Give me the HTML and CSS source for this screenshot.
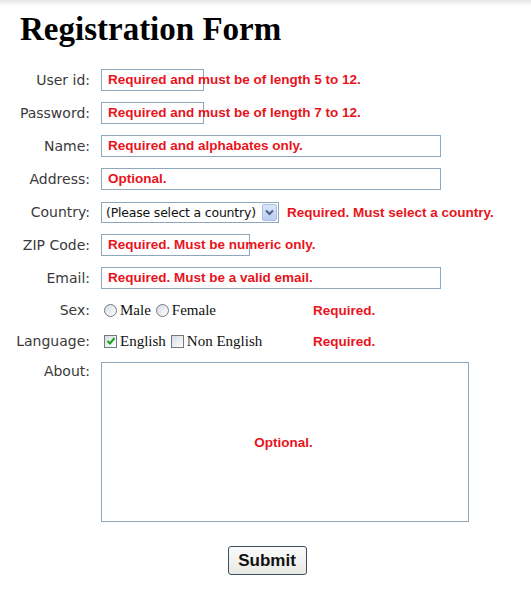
FILE: index.html
```html
<!DOCTYPE html>
<html>
<head>
<meta charset="utf-8">
<link rel="stylesheet" href="styles.css">
</head>
<body>
<div class="topshade"></div>
<h1 class="title">Registration Form</h1>
<div class="form">
  <div class="label">User id:</div>
  <div class="field"><div class="box w-short"></div><span class="msg">Required and must be of length 5 to 12.</span></div>

  <div class="label">Password:</div>
  <div class="field"><div class="box w-short"></div><span class="msg">Required and must be of length 7 to 12.</span></div>

  <div class="label">Name:</div>
  <div class="field"><div class="box w-long"></div><span class="msg">Required and alphabates only.</span></div>

  <div class="label">Address:</div>
  <div class="field"><div class="box w-long"></div><span class="msg">Optional.</span></div>

  <div class="label">Country:</div>
  <div class="field inline">
    <div class="select"><span class="select-text">(Please select a country)</span><span class="select-btn"><svg width="9" height="7" viewBox="0 0 9 7"><path d="M1 1.5 L4.5 5 L8 1.5" fill="none" stroke="#4d6185" stroke-width="2"/></svg></span></div>
    <span class="msg-inline">Required. Must select a country.</span>
  </div>

  <div class="label">ZIP Code:</div>
  <div class="field"><div class="box w-mid"></div><span class="msg">Required. Must be numeric only.</span></div>

  <div class="label">Email:</div>
  <div class="field"><div class="box w-long"></div><span class="msg">Required. Must be a valid email.</span></div>

  <div class="label small">Sex:</div>
  <div class="field choice small">
    <div class="options">
      <span class="radio"></span><span class="opt">Male</span>
      <span class="radio"></span><span class="opt">Female</span>
    </div>
    <span class="req">Required.</span>
  </div>

  <div class="label small">Language:</div>
  <div class="field choice small">
    <div class="options">
      <span class="check on"><svg width="10" height="10" viewBox="0 0 10 10"><path d="M1.5 5 L4 7.5 L8.5 2" fill="none" stroke="#21a121" stroke-width="2"/></svg></span><span class="opt">English</span>
      <span class="check"></span><span class="opt">Non English</span>
    </div>
    <span class="req">Required.</span>
  </div>

  <div class="label top">About:</div>
  <div class="field tall"><div class="textarea"><span class="msg-center">Optional.</span></div></div>
</div>
<div class="actions"><button class="submit">Submit</button></div>
</body>
</html>
```
FILE: styles.css
```css
html, body {
  margin: 0;
  padding: 0;
  background: #fff;
}
body {
  width: 531px;
  height: 594px;
  overflow: hidden;
  position: relative;
}
.topshade {
  position: absolute;
  left: 0;
  top: 0;
  width: 100%;
  height: 6px;
  background: linear-gradient(#e6e6e6, #ffffff);
}
.title {
  font-family: "Liberation Serif", "Times New Roman", serif;
  font-weight: bold;
  font-size: 33px;
  line-height: 38px;
  margin: 0;
  padding: 10px 0 0 20px;
  color: #000;
  position: relative;
}
.form {
  display: grid;
  grid-template-columns: 90px auto;
  column-gap: 11px;
  row-gap: 11px;
  margin-top: 21px;
}
.label {
  font-family: "DejaVu Sans", Verdana, sans-serif;
  font-size: 14px;
  color: #3a3a3a;
  text-align: right;
  height: 22px;
  line-height: 22px;
}
.label.small { height: 20px; line-height: 20px; }
.label.top { line-height: 18px; }
.field {
  position: relative;
  height: 22px;
}
.field.small { height: 20px; }
.field.tall { height: 160px; }
.box {
  box-sizing: border-box;
  height: 22px;
  border: 1px solid #8fa6bb;
  background: #fff;
}
.w-short { width: 103px; }
.w-mid { width: 149px; }
.w-long { width: 340px; }
.msg {
  position: absolute;
  left: 7px;
  top: 0;
  line-height: 22px;
  white-space: nowrap;
  font-family: "Liberation Sans", Arial, sans-serif;
  font-weight: bold;
  font-size: 13.5px;
  color: #e8141c;
}
.inline {
  display: flex;
  align-items: center;
  gap: 8px;
}
.select {
  box-sizing: border-box;
  width: 178px;
  height: 21px;
  border: 1px solid #8fa6bb;
  display: flex;
  align-items: center;
  justify-content: space-between;
  padding: 0 1px 0 4px;
  background: #fff;
}
.select-text {
  font-family: "DejaVu Sans", Verdana, sans-serif;
  font-size: 12.5px;
  color: #111;
  letter-spacing: -0.2px;
  white-space: nowrap;
}
.select-btn {
  width: 15px;
  height: 17px;
  box-sizing: border-box;
  border: 1px solid #a9bde6;
  background: linear-gradient(#dbe6fb, #bccdf2);
  display: flex;
  align-items: center;
  justify-content: center;
  border-radius: 2px;
}
.msg-inline {
  font-family: "Liberation Sans", Arial, sans-serif;
  font-weight: bold;
  font-size: 13.5px;
  color: #e8141c;
  white-space: nowrap;
}
.choice {
  display: flex;
  align-items: center;
}
.options {
  display: flex;
  align-items: center;
  width: 209px;
  padding-left: 3px;
}
.radio {
  width: 13px;
  height: 13px;
  box-sizing: border-box;
  border: 1px solid #6e7a86;
  border-radius: 50%;
  background: linear-gradient(135deg, #d6dbe2, #ffffff);
  margin-right: 3px;
}
.check {
  width: 13px;
  height: 13px;
  box-sizing: border-box;
  border: 1px solid #6e7a86;
  background: linear-gradient(135deg, #d6dbe2, #ffffff);
  display: flex;
  align-items: center;
  justify-content: center;
  margin-right: 3px;
}
.opt {
  font-family: "Liberation Serif", "Times New Roman", serif;
  font-size: 15px;
  color: #111;
  margin-right: 5px;
}
.req {
  font-family: "Liberation Sans", Arial, sans-serif;
  font-weight: bold;
  font-size: 13.5px;
  color: #e8141c;
}
.textarea {
  box-sizing: border-box;
  width: 368px;
  height: 160px;
  border: 1px solid #8fa6bb;
  display: flex;
  align-items: center;
  justify-content: center;
}
.msg-center {
  font-family: "Liberation Sans", Arial, sans-serif;
  font-weight: bold;
  font-size: 13.5px;
  color: #e8141c;
  margin-left: -3px;
}
.actions {
  display: flex;
  justify-content: center;
  padding-left: 3px;
  margin-top: 24px;
}
.submit {
  box-sizing: border-box;
  width: 79px;
  height: 29px;
  border: 1px solid #3c4e62;
  border-radius: 3px;
  background: linear-gradient(#fbfbfb, #e8e8e4);
  font-family: "Liberation Sans", Arial, sans-serif;
  font-weight: bold;
  font-size: 17px;
  color: #111;
  padding: 0;
}
```
